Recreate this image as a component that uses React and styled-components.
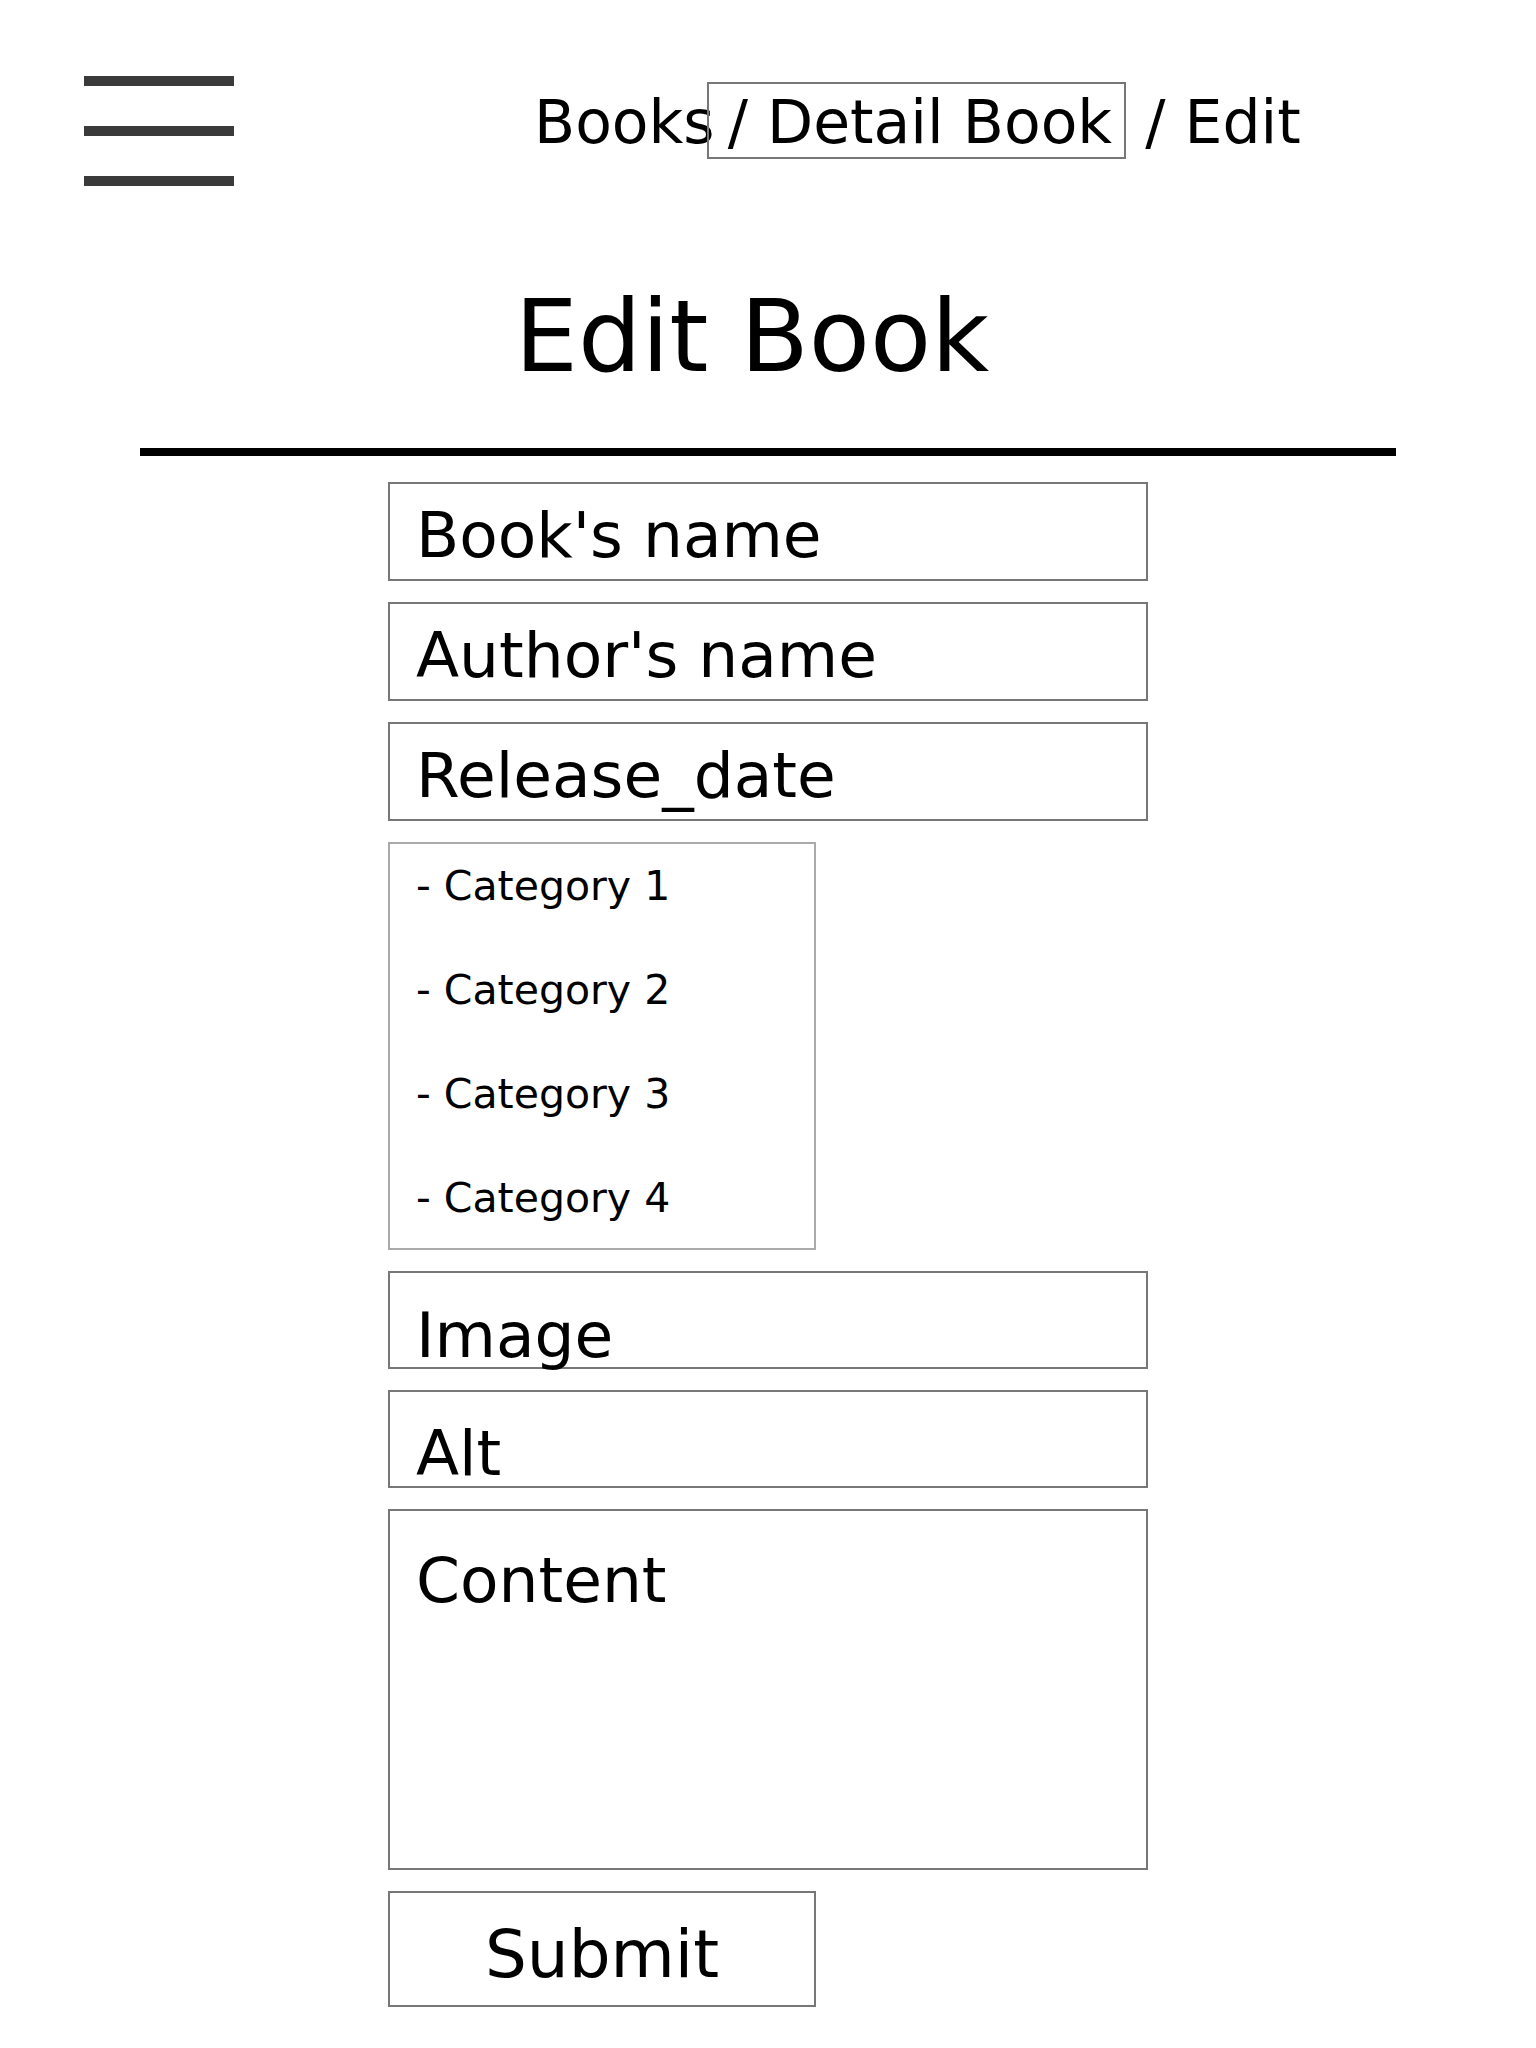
import React from "react";
import styled, { createGlobalStyle } from "styled-components";

const GlobalStyle = createGlobalStyle`
  body {
    margin: 0;
    background: #ffffff;
    font-family: "DejaVu Sans", "Liberation Sans", sans-serif;
    color: #000;
  }
`;

const Page = styled.div`
  width: 1536px;
  min-height: 2048px;
  display: flex;
  flex-direction: column;
`;

const Header = styled.header`
  display: flex;
  align-items: flex-start;
  padding: 76px 0 0 84px;
`;

const Burger = styled.button`
  display: flex;
  flex-direction: column;
  gap: 40px;
  width: 150px;
  padding: 0;
  border: none;
  background: none;
  cursor: pointer;
`;

const BurgerBar = styled.span`
  display: block;
  width: 150px;
  height: 10px;
  background: #3a3a3a;
`;

const Breadcrumb = styled.nav`
  margin: 16px 0 0 300px;
  font-size: 60px;
  line-height: 1;
  white-space: nowrap;
`;

const Crumb = styled.a`
  color: #000;
  text-decoration: none;
  ${(p) =>
    p.$boxed &&
    `
    border: 2px solid #777;
    padding: 3px 12px 0 0;
    margin-left: -8px;
  `}
`;

const Title = styled.h1`
  margin: 101px 0 0;
  padding-right: 32px;
  text-align: center;
  font-size: 100px;
  font-weight: normal;
  line-height: 1;
`;

const Divider = styled.hr`
  width: 1256px;
  height: 8px;
  margin: 61px auto 0;
  border: none;
  background: #000;
`;

const Form = styled.form`
  width: 760px;
  margin: 26px auto 0;
  display: flex;
  flex-direction: column;
  align-items: flex-start;
  gap: 21px;
`;

const Field = styled.div`
  box-sizing: border-box;
  width: 760px;
  height: ${(p) => p.$height || 99}px;
  border: 2px solid #777;
  padding: ${(p) => p.$top || 20}px 0 0 26px;
  font-size: 63px;
  line-height: 1;
  white-space: nowrap;
`;

const CategoryList = styled.ul`
  box-sizing: border-box;
  width: 428px;
  height: 408px;
  margin: 0;
  padding: 22px 0 0 26px;
  list-style: none;
  border: 2px solid #aaa;
  display: flex;
  flex-direction: column;
  gap: 63px;
`;

const CategoryItem = styled.li`
  font-size: 41px;
  line-height: 1;
`;

const SubmitButton = styled.button`
  box-sizing: border-box;
  width: 428px;
  height: 116px;
  padding: 12px 0 0;
  border: 2px solid #777;
  background: #fff;
  font-family: "DejaVu Sans", "Liberation Sans", sans-serif;
  font-size: 66px;
  line-height: 1;
  color: #000;
  display: flex;
  align-items: center;
  justify-content: center;
  cursor: pointer;
`;

const categories = ["Category 1", "Category 2", "Category 3", "Category 4"];

const App = () => {
  return (
    <>
      <GlobalStyle />
      <Page>
        <Header>
          <Burger aria-label="menu">
            <BurgerBar />
            <BurgerBar />
            <BurgerBar />
          </Burger>
          <Breadcrumb>
            <Crumb href="#">Books</Crumb>
            <Crumb href="#" $boxed>
              {" / Detail Book"}
            </Crumb>
            {" / Edit"}
          </Breadcrumb>
        </Header>

        <Title>Edit Book</Title>
        <Divider />

        <Form onSubmit={(e) => e.preventDefault()}>
          <Field>Book's name</Field>
          <Field>Author's name</Field>
          <Field>Release_date</Field>
          <CategoryList>
            {categories.map((c) => (
              <CategoryItem key={c}>- {c}</CategoryItem>
            ))}
          </CategoryList>
          <Field $height={98} $top={31}>
            Image
          </Field>
          <Field $height={98} $top={30}>
            Alt
          </Field>
          <Field $height={361} $top={38}>
            Content
          </Field>
          <SubmitButton type="submit">Submit</SubmitButton>
        </Form>
      </Page>
    </>
  );
};

export default App;
